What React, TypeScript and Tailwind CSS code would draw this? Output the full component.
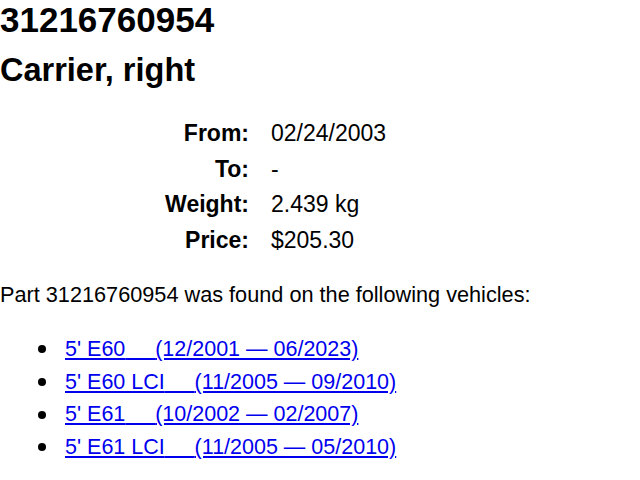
const specs = [
  { label: 'From:', value: '02/24/2003' },
  { label: 'To:', value: '-' },
  { label: 'Weight:', value: '2.439 kg' },
  { label: 'Price:', value: '$205.30' },
];

const pad = '\u00a0\u00a0\u00a0\u00a0\u00a0';

const vehicles = [
  { name: "5' E60", range: '(12/2001 — 06/2023)' },
  { name: "5' E60 LCI", range: '(11/2005 — 09/2010)' },
  { name: "5' E61", range: '(10/2002 — 02/2007)' },
  { name: "5' E61 LCI", range: '(11/2005 — 05/2010)' },
];

export default function App() {
  return (
    <div className="min-h-screen bg-white text-black font-['Liberation_Sans',Arial,sans-serif]">
      <h1 className="text-[35px] font-bold leading-[38px] pt-[1px]">31216760954</h1>
      <h2 className="mt-[13px] text-[32.5px] font-bold leading-[36px]">Carrier, right</h2>

      <div className="mt-[28px] grid grid-cols-[249px_auto] gap-x-[22px] text-[23px]">
        {specs.map((s) => (
          <div key={s.label} className="contents">
            <div className="text-right font-bold leading-[35.7px]">{s.label}</div>
            <div className="leading-[35.7px]">{s.value}</div>
          </div>
        ))}
      </div>

      <p className="mt-[23px] text-[21.7px] leading-[26px]">
        Part 31216760954 was found on the following vehicles:
      </p>

      <ul className="mt-[25px] pl-[38px] text-[21.5px]">
        {vehicles.map((v) => (
          <li key={v.name} className="flex items-center leading-[32.7px]">
            <span className="mr-[19px] h-[8px] w-[8px] shrink-0 rounded-full bg-black" />
            <a href="#" className="text-[#0000ee] underline">
              {v.name}
              {pad}
              {v.range}
            </a>
          </li>
        ))}
      </ul>
    </div>
  );
}
